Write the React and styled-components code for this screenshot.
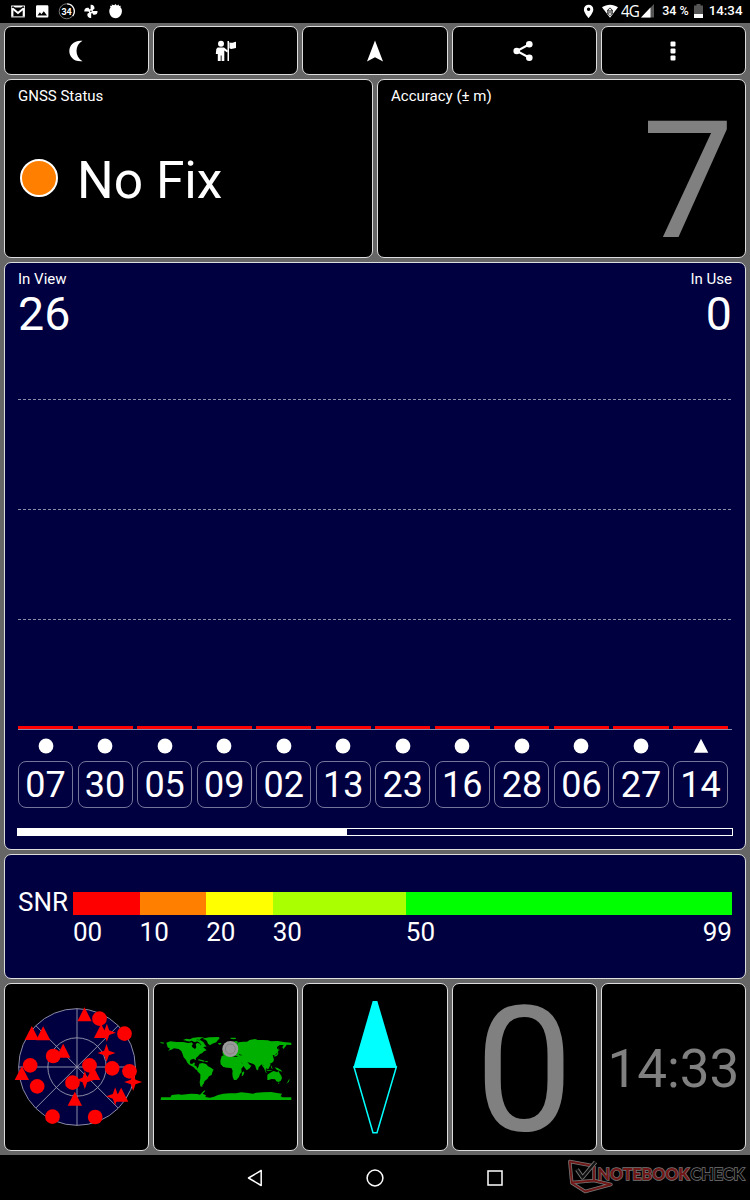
import styled, { createGlobalStyle } from "styled-components";

const satellites = ["07", "30", "05", "09", "02", "13", "23", "16", "28", "06", "27", "14"];

const snrSteps = [
  { label: "00", size: 10, color: "#ff0000" },
  { label: "10", size: 10, color: "#ff8000" },
  { label: "20", size: 10, color: "#ffff00" },
  { label: "30", size: 20, color: "#aaff00" },
  { label: "50", size: 49, color: "#00ff00" },
];

const skyCircles = [
  [297, 116], [372, 161], [158, 228], [89, 256], [110, 319], [267, 256],
  [335, 265], [387, 274], [216, 308], [156, 410], [284, 411],
];
const skyTriangles = [
  [252, 82], [94, 138], [128, 139], [188, 191], [302, 132],
  [64, 258], [278, 258], [223, 335], [362, 323],
];
const skyStars = [[319, 158], [318, 219], [253, 300], [398, 306], [344, 349]];

const StatusIcons = () => (
  <StatusGroup>
    <svg width="114" height="22" viewBox="0 0 114 22" fill="#fff">
      <path d="M2.300 16.500V6.500h11.500v10" fill="none" stroke="#fff" strokeWidth="2.200" />
      <path d="M1.200 16.900h13.600" stroke="#fff" strokeWidth="1" />
      <path d="M2.300 6.800L8 11.500l5.800-4.700" fill="none" stroke="#000" strokeWidth="2" />
      <path d="M2.300 8.300L8 13l5.800-4.700" fill="none" stroke="#fff" strokeWidth="2" />
      <path fillRule="evenodd" d="M27.200 5.300h10a1.200 1.200 0 0 1 1.200 1.200v9.800a1.200 1.200 0 0 1-1.200 1.200h-10a1.200 1.200 0 0 1-1.200-1.200V6.500a1.200 1.200 0 0 1 1.200-1.200z M27.500 15.500h9.500l-3.200-4.300-2.400 3.100-1.500-2z" />
      <circle cx="56.700" cy="11.300" r="7.500" fill="none" stroke="#777" strokeWidth="1" />
      <path d="M57.200 3.800a7.500 7.500 0 0 1 5.500 12.200" fill="none" stroke="#fff" strokeWidth="1.200" />
      <text x="56.600" y="14.500" textAnchor="middle" fontSize="9" fontWeight="700">34</text>
      <g>
        {[0, 90, 180, 270].map((angle) => (
          <path
            key={angle}
            d="M80.600 11.300V4.700c2.900-.2 4.200 1.500 3.800 4.200z"
            transform={`rotate(${angle} 80.900 11.300)`}
          />
        ))}
        <circle cx="80.900" cy="11.300" r="2.200" />
        <circle cx="80.900" cy="11.300" r=".8" fill="#000" />
      </g>
      <path d="M105.500 4l1.300 1.500 2.200-1-.2 1.500 2-.2-.4 1.400c1.200 1.200 1.700 2.700 1.500 4.400-.3 3.800-2.900 6.700-6.200 6.700s-6.100-2.800-6.400-6.500c-.1-1.700.3-3.200 1.200-4.400l-.5-1.600 1.900.2-.3-1.500 2.600.8z" />
    </svg>
  </StatusGroup>
);

const SignalIcons = () => (
  <svg width="38" height="22" viewBox="583 0 38 22" fill="#fff">
    <path fillRule="evenodd" d="M588.600 4.700a4.700 4.700 0 0 0-4.700 4.700c0 3.500 4.700 8.700 4.700 8.700s4.700-5.200 4.700-8.700a4.700 4.700 0 0 0-4.700-4.700z M588.600 7.600a1.700 1.700 0 1 1 0 3.400 1.700 1.700 0 0 1 0-3.400z" />
    <path d="M602 7.300c4.900-3.500 11.100-3.500 16 0l-8 10.500z" />
    <path d="M610 7.600l-3 3v2.600l3 2.800 3-2.800v-2.600z" fill="#000" />
    <path d="M610 8.300l1.900 2.200h-3.800zM610 15.400l1.900-2.200h-3.800zM607.200 11.400h5.600v1.100h-5.600z" />
  </svg>
);

const SkyPlot = () => (
  <svg width="134" height="128" viewBox="28.500 69 402 384">
    <g fill="none" stroke="#9a9ab0" strokeWidth="2.700">
      <circle cx="229.500" cy="261" r="175" fill="#000040" />
      <circle cx="229.500" cy="261" r="87.500" />
      <path d="M229.500 86v350M54.500 261h350M106 137l247 247M353 137L106 384" />
    </g>
    <g fill="#ff0000">
      {skyCircles.map(([x, y]) => (
        <circle key={`${x}-${y}`} cx={x} cy={y} r="22" />
      ))}
      {skyTriangles.map(([x, y]) => (
        <path key={`${x}-${y}`} d={`M${x} ${y}l21.500 42h-43z`} />
      ))}
      {skyStars.map(([x, y]) => (
        <path key={`${x}-${y}`} d={`M${x} ${y - 27}l7 20 20 7-20 7-7 20-7-20-20-7 20-7z`} />
      ))}
    </g>
  </svg>
);

const WorldMap = () => (
  <svg width="134" height="68" viewBox="26 39 402 204">
    <g fill="#00b000">
      <path d="M30 66l12 2-3 3-8-2zM48 68l12-4 18 2 20 0 16 3 10-2 4 5-4 6 4 5 6 4 4-5-2-8 4-6 9 3 4 8 8 4 8 8-8 3-6 6-6 2-6 7-6 5-1 7-6-5-9 3-3 7 3 6 6-1 2-3 5 0-2 8 6 3 3 7 6 2-3 3-7-2-8-8-12-7-6-6-4-8-7-8-3-9-4-10-8-6-14-2-8 4-10 3 6-6-7-4z" />
      <path d="M98 60l10-4 10 2 8-3 12 2 5 4 8 0 8 5 5 8 5 6-7 0-5 3-7-5 3-4-7-7-8-2-6 1-9-4-5 3-9-2z" />
      <path d="M124 54l18-2 20 0-9 3-6 5-9-2-10 0zM161 55l16-3 28-1 3 4-7 7-3 5-12 4-7 5-6-5-3-7-4-5-9-2z" />
      <path d="M145 118l10 2 9 3-4 2-10-3-7-1zM165 123l8 1-2 3-6-1z" />
      <path d="M147 131l9-2 11 3 6 7 9 4 8 6-4 8-2 8-8 4-5 8-8 6-3 8-4 5 0 5-6-2-2-12 2-12 0-12-9-9-1-7 4-6z" />
      <path d="M202 70l9-1 3 3-7 2zM240 53l15 0 3 3-8 2-9-2zM217 85l4-7 4 3 2 8-8 3z" />
      <path d="M216 96l2 8 8 2 4-5 6-3 6 5 4 3 3-5 4 6 9 2 6 3 2-8-8-2 3-5 10 2 9-2-8-5-9-3-10-1-5-8 4-6-4-4-8 4-7 6-8 4-7 5z" />
      <path d="M236 76l10-10 11-3 9 4 12-2 12 0 8-5 16-3 8 3 12 0 18 1 10 3 20-1 18 3 23 2 0 7-14-1-4 6-6 7-3-5 4-7-12 0-8 6 0 4 5 5-3 8-6 4 0 7-3-4-6 1 2 6 2 8-6 8-9 5-3 3 4 8-5 4-5-4-1 8 4 8-4-3-4-10-2-11-6-3-9 9-2 9-4-1-5-14-5-4-9-3-9-3 7 8 5 3-5 8-9 6-7-9-7-14-9-8-4-8-3-12-6-2z" />
      <path d="M214 108l10-4 13-1 4 5 12 2 13 1 5 9 5 11 9-2-5 9-7 8 1 11-5 5-3 9-8 9-7 0-4-10-1-10 1-8-4-8-13-1-11-2-8-8-1-10z" />
      <path d="M275 158l5-4 2 4-4 9-4 1zM333 131l5 3 8 10 2 5-7-4-5-7zM347 149l14 2 6 2-16-1zM350 136l6-5 5 2-4 9-7 2zM361 137l5 0-2 4 4 5-5-1zM364 119l4 0 1 7-3 1zM373 142l9 2 10 6 4 5-8-2-9-4zM371 107l8-4 4-8 1 6-4 6-7 3zM385 82l2 9-2 3z" />
      <path d="M351 164l9-6 5-3 5-2 7 2 4 2 3-5 4 8 5 7 2 8-4 8-7 3-6-2-4-6-10-1-9 3-4 0zM383 188l5 0-3 4zM412 185l4-7 2 1-3 7-7 5z" />
      <path d="M32 232h28l4-7 20-2 10 1 28-3 19 1 8 2 10-10 6-4-2 5-6 6 10 5-2 5 14 2 12-3 12-5 16-4 18-1 20 0 16-3 20 2 15 2 10-3 20-1 24-1 18 3 15 2-4 8 6 3H423v8H31z" />
    </g>
    <g fill="none" stroke="#000" strokeWidth="2">
      <path d="M104 62l8 5 12-3 8 6M127 78l10-3M257 74l8-8M138 63l7 5M266 103l8 3M360 140l6-4" />
    </g>
    <circle cx="240" cy="87" r="24" fill="#999" />
    <circle cx="240" cy="87" r="15" fill="none" stroke="#7c7c7c" strokeWidth="2.500" />
  </svg>
);

const Compass = () => (
  <svg width="48" height="136" viewBox="153 57 144 408">
    <path d="M218 63h14l59 200H160z" fill="#00ffff" />
    <path d="M162 261l57 197h12l58-197z" fill="none" stroke="#00ffff" strokeWidth="4.500" />
  </svg>
);

const Watermark = () => (
  <WatermarkSvg width="182" height="38" viewBox="0 0 182 38">
    <g fill="none" strokeLinejoin="round">
      <path d="M26 7L1.800 2.500 3.800 24l13.400 8.500L43 25.500 26 21.500 4 23.500" stroke="#777" strokeWidth="3.400" />
      <path d="M26 7v14" stroke="#777" strokeWidth="3.400" />
      <path d="M26 7L1.800 2.500 3.800 24l13.400 8.500L43 25.500 26 21.500 4 23.500M26 7v14" stroke="#701818" strokeWidth="1.900" />
      <path d="M9 10.500l5.500 8L27.500 3" stroke="#777" strokeWidth="4.200" />
      <path d="M9 10.500l5.500 8L27.500 3" stroke="#111" strokeWidth="2.300" />
    </g>
    <text x="29.500" y="20.500" textLength="92" lengthAdjust="spacingAndGlyphs" fill="#701818" stroke="#777" strokeWidth="1.400" paintOrder="stroke">NOTEBOOK</text>
    <text x="122.500" y="20.500" textLength="54" lengthAdjust="spacingAndGlyphs" fill="#080808" stroke="#777" strokeWidth="1.400" paintOrder="stroke" fontWeight="700">CHECK</text>
  </WatermarkSvg>
);

export default function App() {
  return (
    <Screen>
      <GlobalStyle />
      <StatusBar>
        <StatusIcons />
        <StatusGroup>
          <SignalIcons />
          <Network>4G</Network>
          <svg width="13" height="14" viewBox="0 0 13 14">
            <path d="M0 13.500L13 0v13.500z" fill="#555" />
            <path d="M0 13.500L9.500 3.600v9.900z" fill="#fff" />
          </svg>
          <Percent>34 %</Percent>
          <svg width="9" height="14" viewBox="0 0 9 14">
            <path d="M0 1.500h2.500V0h4v1.500H9V14H0z" fill="#555" />
            <path d="M0 10h9v4H0z" fill="#fff" />
          </svg>
          <Clock>14:34</Clock>
        </StatusGroup>
      </StatusBar>

      <Board>
        <Row $height={49}>
          <Cell>
            <svg width="24" height="24" viewBox="0 0 24 24">
              <path d="M17.500 1.800C0 0 0 24 17.500 22.200C9.500 18 9.500 6 17.500 1.800z" fill="#fff" />
            </svg>
          </Cell>
          <Cell>
            <svg width="22" height="22" viewBox="0 0 22 22" fill="#fff">
              <circle cx="6" cy="3.800" r="3" />
              <path d="M2.700 7.500h6.300l4 3.300-.8 1.600-2.900-1.800V21H6.600v-5.500h-.9V21H2.800v-7H.8l.5-5z" />
              <path d="M12.500 1h1.500v20h-1.500zM14.400 2.200c2 1.500 4 0 6.600-.4v6.300c-2.500.2-4.500 1.700-6.600.2z" />
            </svg>
          </Cell>
          <Cell>
            <svg width="18" height="22" viewBox="0 0 18 22">
              <path d="M9 .5l8 21-8-4.200-8 4.200z" fill="#fff" />
            </svg>
          </Cell>
          <Cell>
            <ShareIcon width="20" height="22" viewBox="0 0 20 22" fill="#fff">
              <path d="M16 4.500L3.800 11 16 17.500" fill="none" stroke="#fff" strokeWidth="2" />
              <circle cx="16.300" cy="4.300" r="3.300" />
              <circle cx="3.700" cy="11" r="3.300" />
              <circle cx="16.300" cy="17.700" r="3.300" />
            </ShareIcon>
          </Cell>
          <Cell>
            <svg width="6" height="20" viewBox="0 0 6 20" fill="#fff">
              <rect x=".5" y=".5" width="5" height="5" rx="1" />
              <rect x=".5" y="7.500" width="5" height="5" rx="1" />
              <rect x=".5" y="14.500" width="5" height="5" rx="1" />
            </svg>
          </Cell>
        </Row>

        <Row $height={179}>
          <StatusCell>
            <Label>GNSS Status</Label>
            <Fix>
              <FixLight />
              No Fix
            </Fix>
          </StatusCell>
          <StatusCell>
            <Label>Accuracy (± m)</Label>
            <Accuracy>7</Accuracy>
          </StatusCell>
        </Row>

        <ChartPanel>
          <Counts>
            <Count>
              <Label>In View</Label>
              26
            </Count>
            <Count $right>
              <Label>In Use</Label>
              0
            </Count>
          </Counts>
          <Grid>
            <GridLine />
            <GridLine />
            <GridLine />
          </Grid>
          <Bars>
            {satellites.map((id) => (
              <Bar key={id} />
            ))}
          </Bars>
          <Satellites>
            {satellites.map((id, i) => (
              <Satellite key={id}>
                <svg width="16" height="16" viewBox="0 0 16 16" fill="#fff">
                  {i === satellites.length - 1 ? (
                    <path d="M8 .8l7.300 14H.7z" />
                  ) : (
                    <circle cx="8" cy="8" r="7.400" />
                  )}
                </svg>
                <SatelliteId>{id}</SatelliteId>
              </Satellite>
            ))}
          </Satellites>
          <Progress>
            <ProgressFill />
          </Progress>
        </ChartPanel>

        <SnrPanel>
          <SnrTitle>SNR</SnrTitle>
          <SnrScale>
            {snrSteps.map((step) => (
              <SnrStep key={step.label} $size={step.size} $color={step.color}>
                <span>{step.label}</span>
                {step.label === "50" && <span>99</span>}
              </SnrStep>
            ))}
          </SnrScale>
        </SnrPanel>

        <Row $height={168}>
          <Cell>
            <SkyPlot />
          </Cell>
          <Cell>
            <WorldMap />
          </Cell>
          <Cell>
            <Compass />
          </Cell>
          <Cell>
            <Speed>0</Speed>
          </Cell>
          <Cell>
            <Time>14:33</Time>
          </Cell>
        </Row>
      </Board>

      <NavBar>
        <svg width="16" height="18" viewBox="0 0 16 18" fill="none" stroke="#fff" strokeWidth="1.500">
          <path d="M14.200 1.500v15L1.500 9z" strokeLinejoin="round" />
        </svg>
        <svg width="18" height="18" viewBox="0 0 18 18" fill="none" stroke="#fff" strokeWidth="1.500">
          <circle cx="9" cy="9" r="7.900" />
        </svg>
        <svg width="16" height="16" viewBox="0 0 16 16" fill="none" stroke="#fff" strokeWidth="1.500">
          <rect x="1" y="1" width="14" height="14" />
        </svg>
        <Watermark />
      </NavBar>
    </Screen>
  );
}

const GlobalStyle = createGlobalStyle`
  * {
    box-sizing: border-box;
  }
  body {
    margin: 0;
    background-color: #000000;
  }
  svg {
    display: block;
    flex-shrink: 0;
  }
`;

const Screen = styled.div`
  width: 750px;
  height: 1200px;
  display: flex;
  flex-direction: column;
  overflow: hidden;
  color: #ffffff;
  font-family: Roboto, sans-serif;
`;

const StatusBar = styled.div`
  height: 23px;
  padding: 0 7.500px 1px 10px;
  display: flex;
  justify-content: space-between;
  background-color: #000000;
`;
const StatusGroup = styled.div`
  display: flex;
  align-items: center;
  white-space: nowrap;
`;
const Network = styled.span`
  width: 18px;
  margin-right: 2px;
  font-family: "Open Sans", sans-serif;
  font-size: 17px;
  line-height: 22px;
  letter-spacing: -1.2px;
  transform: scaleX(0.9);
  transform-origin: left;
`;
const Percent = styled.span`
  font-size: 12.500px;
  font-weight: 500;
  line-height: 22px;
  margin: 0 5px 0 8px;
`;
const Clock = styled.span`
  font-size: 13.300px;
  font-weight: 500;
  line-height: 22px;
  margin: 0 0 0 6px;
`;

const Board = styled.div`
  height: 1132px;
  padding: 3px 4px 4px;
  display: flex;
  flex-direction: column;
  gap: 4px;
  background-color: #666666;
`;
const Row = styled.div`
  height: ${({ $height }) => $height}px;
  display: flex;
  gap: 4px;
`;
const Cell = styled.div`
  flex: 1 1 0;
  min-width: 0;
  display: flex;
  justify-content: center;
  align-items: center;
  background-color: #000000;
  border: 1px solid #dddddd;
  border-radius: 7px;
`;
const ShareIcon = styled.svg`
  margin-right: 3px;
`;
const StatusCell = styled(Cell)`
  flex-direction: column;
  align-items: stretch;
  justify-content: flex-start;
  padding: 7px 13px;
`;
const Label = styled.div`
  font-size: 15px;
  line-height: 18px;
`;
const Fix = styled.div`
  display: flex;
  align-items: center;
  gap: 19px;
  margin: 46px 0 0 2px;
  font-size: 51.500px;
  line-height: 60px;
`;
const FixLight = styled.div`
  width: 38px;
  height: 38px;
  margin-bottom: 6px;
  background-color: #ff8000;
  border: 2px solid #ffffff;
  border-radius: 50%;
`;
const Accuracy = styled.div`
  color: #808080;
  font-size: 164px;
  line-height: 140px;
  margin: 6px -2px 0 0;
  text-align: right;
`;

const ChartPanel = styled(Cell)`
  flex: 0 0 588px;
  flex-direction: column;
  align-items: stretch;
  justify-content: flex-start;
  padding: 7px 13px;
  background-color: #000040;
`;
const Counts = styled.div`
  height: 74px;
  display: flex;
  justify-content: space-between;
`;
const Count = styled.div`
  font-size: 46.500px;
  line-height: 52px;
  text-align: ${({ $right }) => ($right ? "right" : "left")};
`;
const Grid = styled.div`
  padding-top: 55px;
  display: flex;
  flex-direction: column;
  gap: 109px;
`;
const GridLine = styled.div`
  height: 1px;
  background-image: repeating-linear-gradient(90deg, #8c8cab 0 3px, transparent 3px 5px);
`;
const Bars = styled.div`
  height: 111px;
  margin-top: -1px;
  padding: 0 4px 0 0;
  display: flex;
  align-items: flex-end;
  gap: 4.500px;
  border-bottom: 1px solid #8c8cab;
`;
const Bar = styled.div`
  flex: 1 1 0;
  height: 3px;
  background-color: #ff0000;
`;
const Satellites = styled.div`
  padding: 8px 4px 0 0;
  display: flex;
  gap: 4.500px;
`;
const Satellite = styled.div`
  flex: 1 1 0;
  display: flex;
  flex-direction: column;
  align-items: center;
  gap: 7px;
`;
const SatelliteId = styled.div`
  width: 100%;
  height: 47px;
  border: 1px solid #75759a;
  border-radius: 8px;
  font-size: 36px;
  line-height: 46px;
  text-align: center;
`;
const Progress = styled.div`
  height: 8px;
  margin: 20px -1px 0;
  border: 1px solid #ffffff;
`;
const ProgressFill = styled.div`
  width: 46.1%;
  height: 100%;
  background-color: #ffffff;
`;

const SnrPanel = styled(Cell)`
  flex: 0 0 125px;
  align-items: flex-start;
  justify-content: flex-start;
  padding: 37px 13px 0;
  background-color: #000040;
  font-size: 26px;
`;
const SnrTitle = styled.div`
  width: 55px;
  line-height: 20px;
`;
const SnrScale = styled.div`
  flex: 1;
  display: flex;
`;
const SnrStep = styled.div`
  flex: ${({ $size }) => $size} 1 0;
  min-width: 0;
  display: flex;
  justify-content: space-between;
  border-top: 23px solid ${({ $color }) => $color};
  line-height: 34px;
`;

const Speed = styled.div`
  color: #808080;
  font-size: 175px;
  line-height: 120px;
  padding-top: 8px;
`;
const Time = styled.div`
  color: #808080;
  font-size: 53px;
  line-height: 60px;
  padding-top: 4px;
`;

const NavBar = styled.div`
  position: relative;
  height: 45px;
  padding-left: 247px;
  display: flex;
  align-items: center;
  gap: 103px;
  background-color: #000000;
`;
const WatermarkSvg = styled.svg`
  position: absolute;
  right: 0;
  top: 4px;
  font-family: Lato, sans-serif;
  font-size: 17px;
  font-weight: 900;
`;
